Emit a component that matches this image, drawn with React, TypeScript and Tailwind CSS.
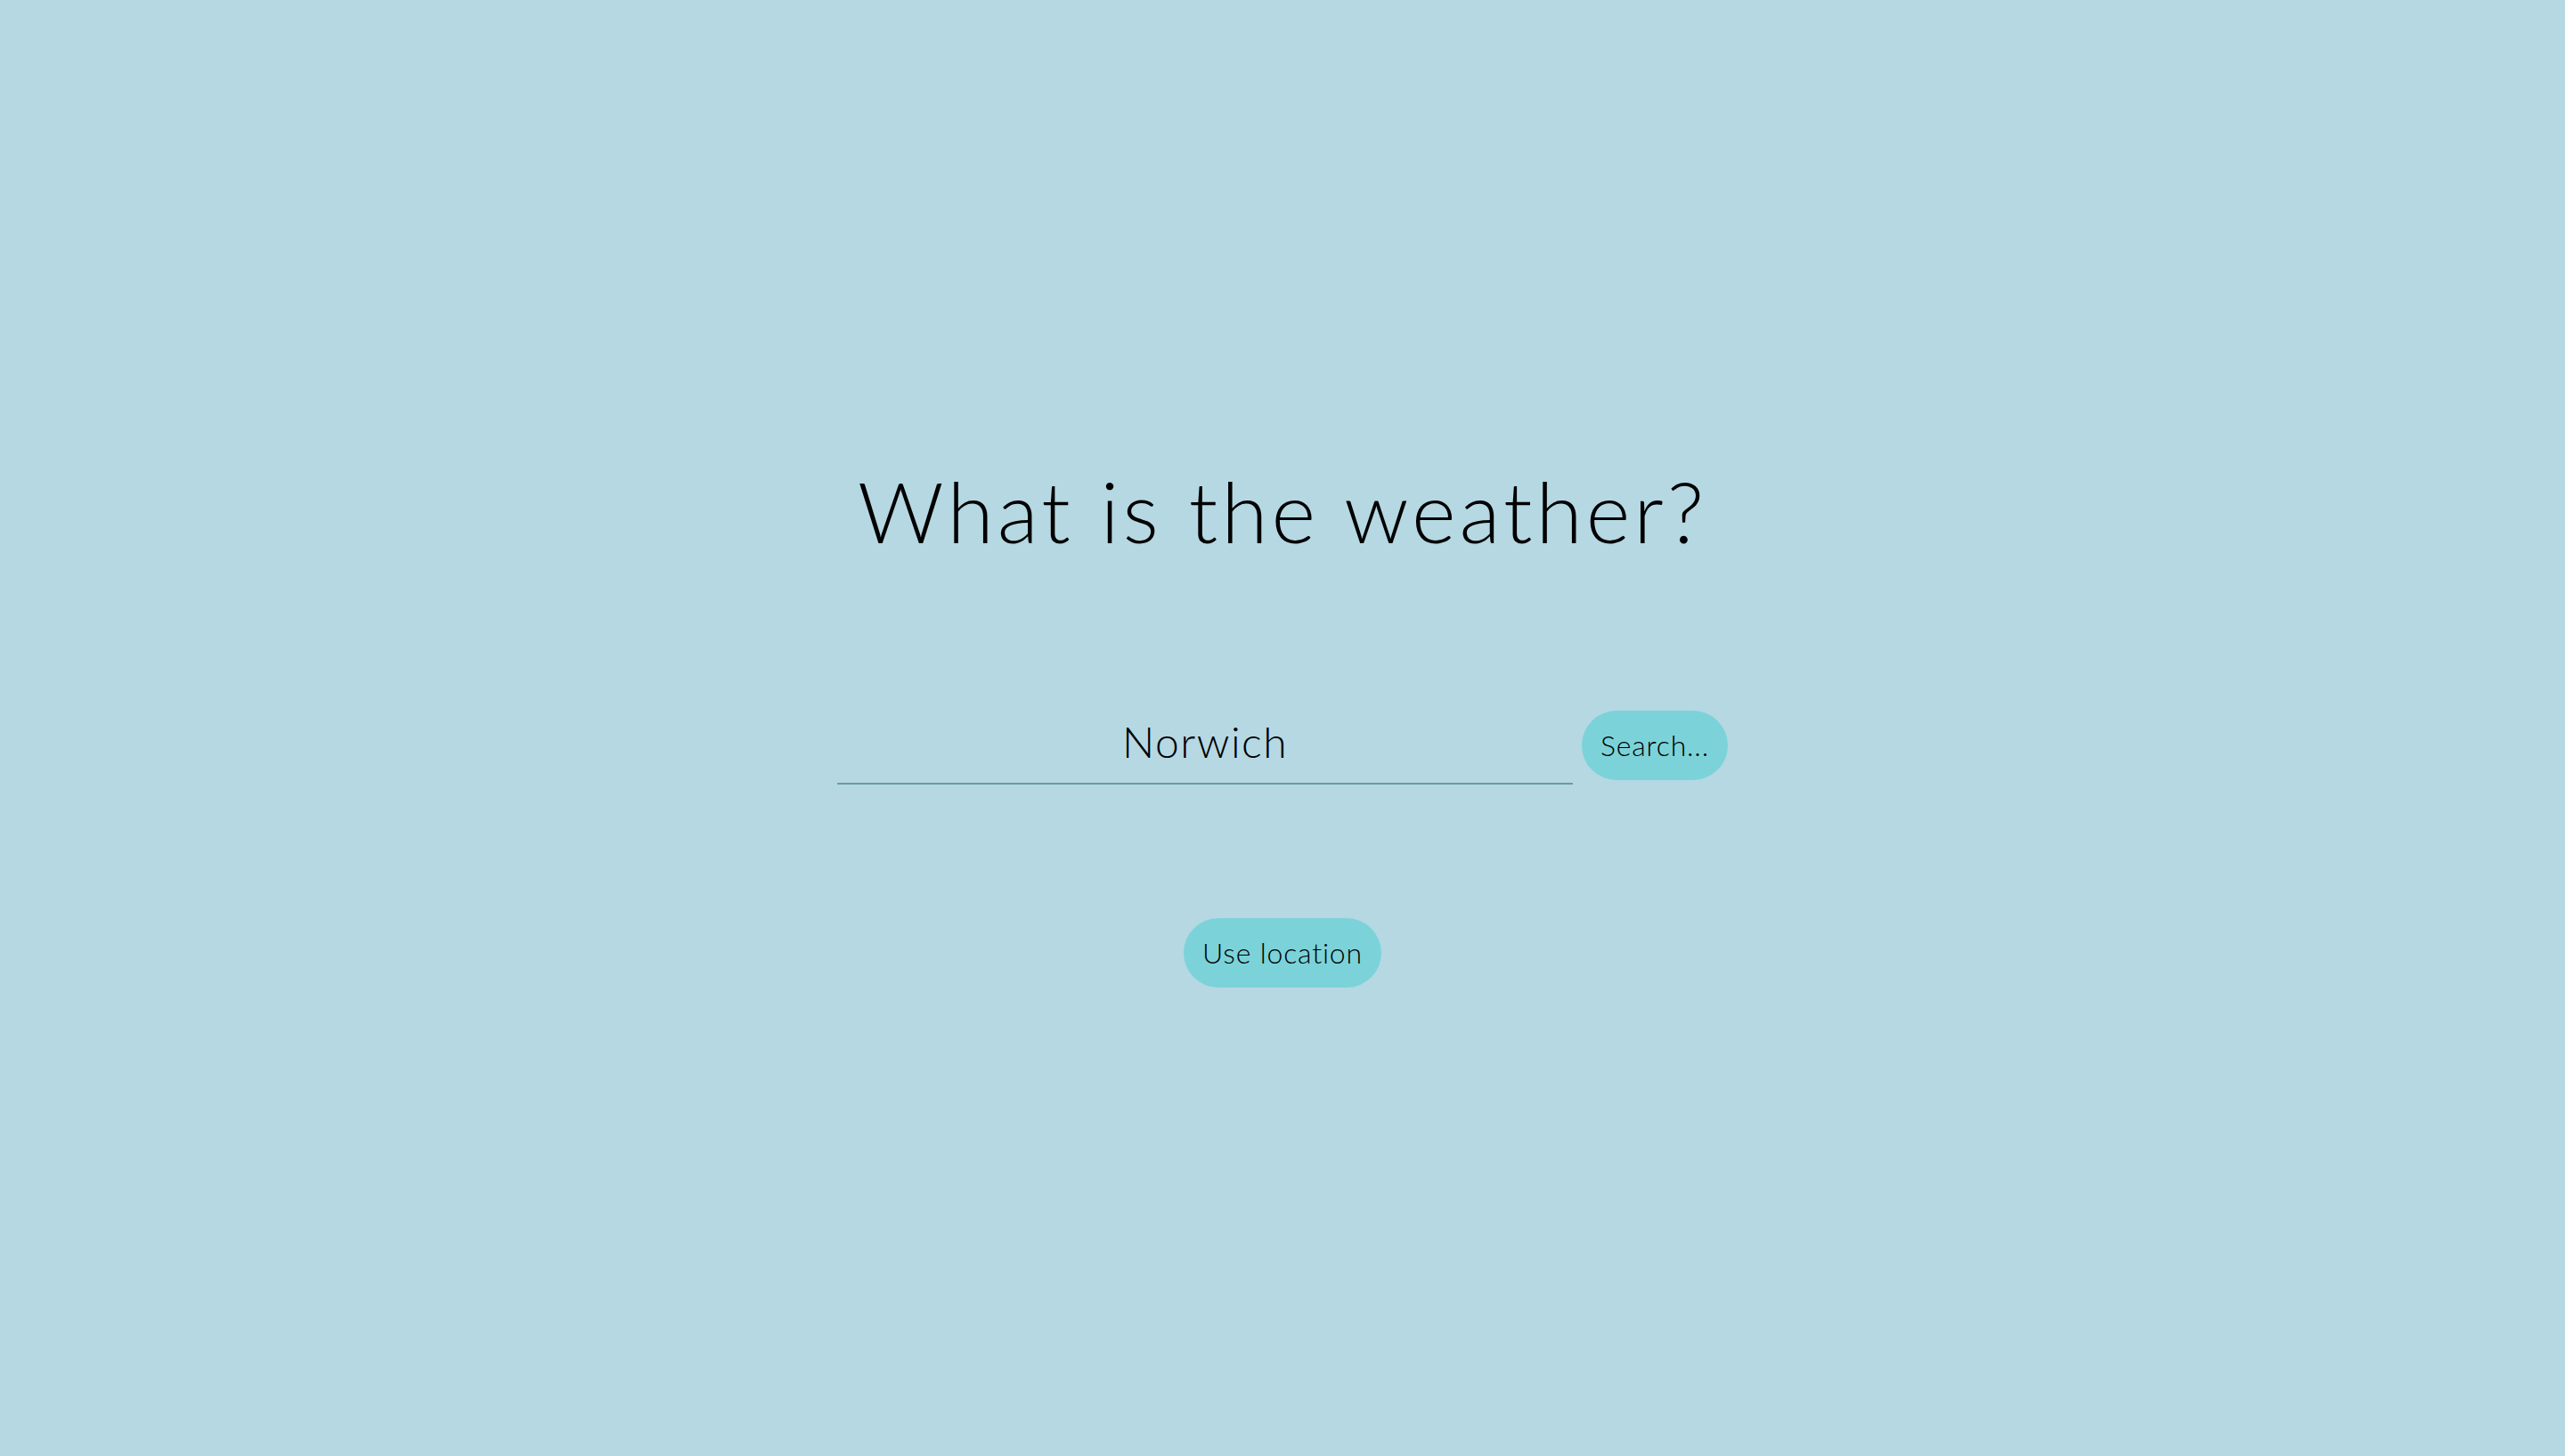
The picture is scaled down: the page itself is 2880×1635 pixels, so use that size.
import { useState } from 'react';

const font = { fontFamily: '"Lato", "Open Sans", sans-serif' };

const App = () => {
  const [city, setCity] = useState('Norwich');

  return (
    <main
      className="w-full h-[1635px] bg-[#b5d8e3] flex flex-col items-center font-['Lato',sans-serif] text-black"
      style={font}
    >
      <h1 className="mt-[518px] text-[95px] leading-[110px] font-light tracking-[4px]">
        What is the weather?
      </h1>

      <form className="mt-[170px] flex items-end gap-[10px]" onSubmit={(e) => e.preventDefault()}>
        <input
          value={city}
          onChange={(e) => setCity(e.target.value)}
          className="w-[826px] h-[80px] pb-[16px] bg-transparent border-b-2 border-[#6b9ba1] text-center text-[48px] tracking-[1.5px] font-light outline-none"
        />
        <button
          type="submit"
          className="h-[78px] px-[21px] mb-[5px] rounded-full bg-[#7bd3d9] text-[32px] tracking-[0.8px] font-light"
        >
          Search...
        </button>
      </form>

      <button className="mt-[150px] h-[78px] px-[21px] rounded-full bg-[#7bd3d9] text-[32px] tracking-[0.8px] font-light">
        Use location
      </button>
    </main>
  );
};

export default App;
